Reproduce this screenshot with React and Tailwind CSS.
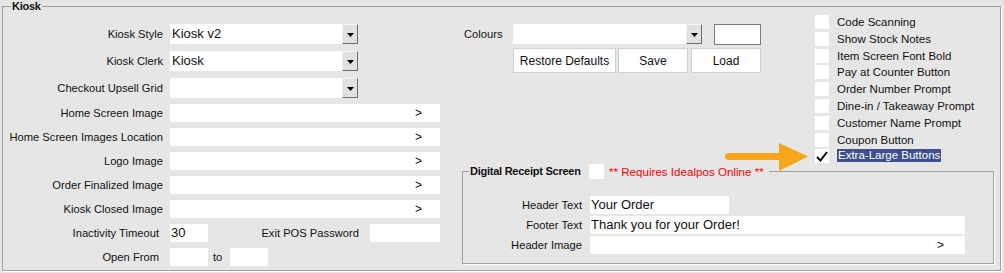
import React from 'react';

const DropButton = () => (
  <div className="w-[16px] h-full bg-[#e1e1e1] border-t border-l border-t-[#f4f4f4] border-l-[#f4f4f4] border-r border-b border-r-[#6d6d6d] border-b-[#6d6d6d] flex items-center justify-center pt-[2px]">
    <svg width="7" height="4" viewBox="0 0 7 4">
      <path d="M0 0h7L3.5 4z" fill="#000" />
    </svg>
  </div>
);

const FileRow = ({ label }) => (
  <div className="flex items-center h-[18px] mb-[6px]">
    <span className="w-[160px] text-right whitespace-nowrap">{label}</span>
    <div className="ml-[7px] w-[270px] h-[18px] bg-white flex items-center justify-end pr-[18px] text-[12px]">&gt;</div>
  </div>
);

const SelectRow = ({ label, value }) => (
  <div className="flex items-center h-[20px] mb-[7px]">
    <span className="w-[160px] text-right whitespace-nowrap">{label}</span>
    <div className="ml-[7px] w-[188px] h-[20px] flex">
      <div className="flex-1 bg-white pl-[2px] text-[13px] leading-[20px]">{value}</div>
      <DropButton />
    </div>
  </div>
);

const options = [
  'Code Scanning',
  'Show Stock Notes',
  'Item Screen Font Bold',
  'Pay at Counter Button',
  'Order Number Prompt',
  'Dine-in / Takeaway Prompt',
  'Customer Name Prompt',
  'Coupon Button',
  'Extra-Large Buttons',
];

const App = () => {
  return (
    <div className="relative w-[1004px] h-[273px] bg-[#e6e6e6] pl-[2px] overflow-hidden font-['Liberation_Sans',Arial,sans-serif] text-[11.2px] text-[#111]">
      <fieldset className="w-[999px] h-[271px] border border-[#a0a0a0] shadow-[1px_1px_0_#fff]">
        <legend className="ml-[8px] px-[1px] font-bold text-[11px] tracking-[-0.25px] leading-[12px]">Kiosk</legend>
        <div className="flex">
          {/* left column */}
          <div className="w-[437px] pt-[12px]">
            <SelectRow label="Kiosk Style" value="Kiosk v2" />
            <SelectRow label="Kiosk Clerk" value="Kiosk" />
            <div className="flex items-center h-[20px] mb-[6px]">
              <span className="w-[160px] text-right whitespace-nowrap">Checkout Upsell Grid</span>
              <div className="ml-[7px] w-[188px] h-[20px] flex">
                <div className="flex-1 bg-white" />
                <DropButton />
              </div>
            </div>
            <FileRow label="Home Screen Image" />
            <FileRow label="Home Screen Images Location" />
            <FileRow label="Logo Image" />
            <FileRow label="Order Finalized Image" />
            <FileRow label="Kiosk Closed Image" />
            <div className="flex items-center h-[18px] mb-[6px]">
              <span className="w-[160px] text-right pr-[4px] whitespace-nowrap">Inactivity Timeout</span>
              <div className="ml-[7px] w-[38px] h-[18px] bg-white pl-[1px] text-[13px] leading-[18px]">30</div>
              <span className="w-[151px] text-right whitespace-nowrap">Exit POS Password</span>
              <div className="ml-[11px] w-[70px] h-[18px] bg-white" />
            </div>
            <div className="flex items-center h-[18px]">
              <span className="w-[160px] text-right pr-[4px] whitespace-nowrap">Open From</span>
              <div className="ml-[7px] w-[38px] h-[18px] bg-white" />
              <span className="w-[22px] pl-[5px]">to</span>
              <div className="w-[38px] h-[18px] bg-white" />
            </div>
          </div>

          {/* right section */}
          <div className="ml-[22px] w-[538px] flex flex-col">
            <div className="flex h-[152px]">
              <div className="w-[300px] pt-[12px]">
                <div className="flex h-[21px]">
                  <span className="w-[51px] pl-[2px] leading-[20px]">Colours</span>
                  <div className="w-[189px] h-[20px] flex">
                    <div className="flex-1 bg-white" />
                    <DropButton />
                  </div>
                  <div className="ml-[12px] w-[47px] h-[21px] bg-white border border-[#7a7a7a]" />
                </div>
                <div className="flex mt-[3px] ml-[51px] text-[12px]">
                  <button className="w-[103px] h-[25px] bg-white border border-[#d0d0d0]">Restore Defaults</button>
                  <button className="ml-[2px] w-[70px] h-[25px] bg-white border border-[#d0d0d0]">Save</button>
                  <button className="ml-[3px] w-[70px] h-[25px] bg-white border border-[#d0d0d0]">Load</button>
                </div>
              </div>
              <div className="ml-[53px] pt-[3px] flex flex-col text-[11.5px]">
                {options.map((o, i) => {
                  const last = i === options.length - 1;
                  return (
                    <div key={o} className="flex h-[16.8px] shrink-0">
                      <div className="w-[14px] h-[14px] bg-white flex items-center justify-center">
                        {last && (
                          <svg width="12" height="11" viewBox="0 0 12 11">
                            <path d="M1 6 L4.5 9.5 L11 1" fill="none" stroke="#000" strokeWidth="2" />
                          </svg>
                        )}
                      </div>
                      <span
                        className={
                          last
                            ? 'ml-[8px] px-[1px] leading-[13px] h-[13px] bg-[#3d4f8e] text-white whitespace-nowrap'
                            : 'ml-[8px] leading-[14px] whitespace-nowrap'
                        }
                      >
                        {o}
                      </span>
                    </div>
                  );
                })}
              </div>
            </div>

            <fieldset className="w-[532px] h-[100px] border border-[#a0a0a0] shadow-[1px_1px_0_#fff]">
              <legend className="ml-[6px] px-[1px]">
                <span className="flex items-center h-[15px]">
                  <span className="w-[112px] font-bold text-[11px] tracking-[-0.25px] whitespace-nowrap">Digital Receipt Screen</span>
                  <span className="ml-[7px] w-[15px] h-[15px] bg-white" />
                  <span className="ml-[5px] pr-[4px] text-[11.6px] text-[#ff0000] whitespace-nowrap">** Requires Idealpos Online **</span>
                </span>
              </legend>
              <div className="pt-[17px] flex flex-col gap-[2px]">
                <div className="flex items-center h-[18px]">
                  <span className="w-[119px] text-right whitespace-nowrap">Header Text</span>
                  <div className="ml-[8px] w-[139px] h-[18px] bg-white text-[13px] leading-[18px] pl-[1px]">Your Order</div>
                </div>
                <div className="flex items-center h-[18px]">
                  <span className="w-[119px] text-right whitespace-nowrap">Footer Text</span>
                  <div className="ml-[8px] w-[375px] h-[18px] bg-white text-[13px] leading-[18px] pl-[1px]">Thank you for your Order!</div>
                </div>
                <div className="flex items-center h-[18px]">
                  <span className="w-[119px] text-right whitespace-nowrap">Header Image</span>
                  <div className="ml-[8px] w-[375px] h-[18px] bg-white flex items-center justify-end pr-[21px] text-[12px]">&gt;</div>
                </div>
              </div>
            </fieldset>
          </div>
        </div>
      </fieldset>

      {/* annotation arrow */}
      <svg className="absolute left-[725px] top-[143px]" width="85" height="29" viewBox="0 0 85 29">
        <rect x="0" y="10" width="58" height="7" rx="3.5" fill="#f9a51a" />
        <path d="M54 0 L83 13.5 L54 28 Z" fill="#f9a51a" />
      </svg>
    </div>
  );
};

export default App;
